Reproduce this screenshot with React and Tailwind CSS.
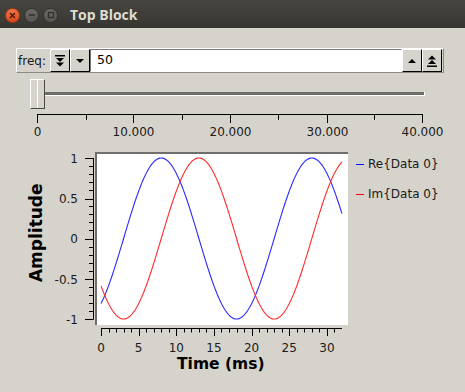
import React from 'react';

const FONT = { fontFamily: '"DejaVu Sans", "Liberation Sans", sans-serif' };

function wave(fn) {
  const pts = [];
  for (let i = 0; i <= 320; i++) {
    const t = i / 10;
    const x = 101 + t * 7.53;
    const y = 237.5 - 80.5 * fn((2 * Math.PI * (t - 8)) / 20);
    pts.push(`${x.toFixed(2)},${y.toFixed(2)}`);
  }
  return pts.join(' ');
}

function TitleBar() {
  return (
    <div className="h-[28px] flex items-center bg-gradient-to-b from-[#46453f] to-[#373632]">
      <div className="flex items-center gap-[4px] pl-[5px] pt-[2px]">
        <div className="w-[15px] h-[15px] rounded-full bg-gradient-to-b from-[#f0754a] to-[#d9461a] border border-[#a8380f] flex items-center justify-center">
          <svg width="7" height="7" viewBox="0 0 7 7"><path d="M1 1 L6 6 M6 1 L1 6" stroke="#4a1a08" strokeWidth="1.3" /></svg>
        </div>
        <div className="w-[15px] h-[15px] rounded-full bg-gradient-to-b from-[#6b6a65] to-[#55544f] border border-[#33322e] flex items-center justify-center">
          <svg width="8" height="8" viewBox="0 0 8 8"><path d="M1 4 H7" stroke="#2e2d2a" strokeWidth="1.4" /></svg>
        </div>
        <div className="w-[15px] h-[15px] rounded-full bg-gradient-to-b from-[#6b6a65] to-[#55544f] border border-[#33322e] flex items-center justify-center">
          <svg width="8" height="8" viewBox="0 0 8 8"><rect x="1.5" y="1.5" width="5" height="5" fill="none" stroke="#2e2d2a" strokeWidth="1.2" /></svg>
        </div>
      </div>
      <span className="ml-[12px] text-[14px] font-bold text-[#dfdbd2]" style={{ fontFamily: '"Open Sans", "Liberation Sans", sans-serif' }}>
        Top Block
      </span>
    </div>
  );
}

function ArrowButton({ kind }) {
  return (
    <div className="w-[20px] h-[23px] bg-[#d6d2cc] border-t border-l border-t-white border-l-white border-b border-r border-b-black border-r-black flex items-center justify-center">
      <svg width="12" height="14" viewBox="0 0 12 14">
        {kind === 'ddown' && (
          <g fill="black">
            <rect x="1" y="1" width="10" height="1.5" />
            <polygon points="2,4 10,4 6,8" />
            <polygon points="2,8.5 10,8.5 6,12.5" />
          </g>
        )}
        {kind === 'down' && <polygon points="2,5 10,5 6,9" fill="black" />}
        {kind === 'up' && <polygon points="2,9 10,9 6,5" fill="black" />}
        {kind === 'dup' && (
          <g fill="black">
            <polygon points="2,5.5 10,5.5 6,1.5" />
            <polygon points="2,10 10,10 6,6" />
            <rect x="1" y="11.5" width="10" height="1.5" />
          </g>
        )}
      </svg>
    </div>
  );
}

function Toolbar() {
  return (
    <div className="w-[428px] h-[25px] flex items-center border-t border-l border-t-white border-l-white border-b border-r border-b-[#8c8a85] border-r-[#8c8a85]">
      <span className="w-[33px] pl-[1px] text-[12px] text-[#1a1a1a]" style={FONT}>freq:</span>
      <ArrowButton kind="ddown" />
      <ArrowButton kind="down" />
      <div className="w-[312px] h-[23px] bg-white border-t border-l border-t-[#7a7873] border-l-[#7a7873] border-b border-r border-b-white border-r-white flex items-center pl-[6px] text-[12.5px] text-black" style={FONT}>
        50
      </div>
      <ArrowButton kind="up" />
      <ArrowButton kind="dup" />
    </div>
  );
}

function Slider() {
  return (
    <div className="flex items-center h-[30px] ml-[14px]">
      <div className="w-[15px] h-[30px] bg-[#d6d2cc] border-t border-l border-t-white border-l-white border-b border-r border-b-[#4a4945] border-r-[#4a4945] flex justify-center">
        <div className="w-[1px] h-full bg-[#8a8883] border-r border-r-white" />
      </div>
      <div className="w-[380px] h-[4px] bg-[#6e6d69] border-b border-r border-b-white border-r-white" />
    </div>
  );
}

function Scale() {
  const majors = [[37, '0'], [133, '10.000'], [230, '20.000'], [327, '30.000'], [422, '40.000']];
  const minors = [86, 182, 278, 374];
  return (
    <svg width="465" height="30" viewBox="0 110 465 30" className="block -ml-[16px]">
      <line x1="37" y1="113.5" x2="422.5" y2="113.5" stroke="black" />
      {majors.map(([x]) => <line key={x} x1={x + 0.5} y1="113" x2={x + 0.5} y2="122" stroke="black" />)}
      {minors.map((x) => <line key={x} x1={x + 0.5} y1="113" x2={x + 0.5} y2="119" stroke="black" />)}
      {majors.map(([x, l]) => (
        <text key={l} x={x + 0.5} y="135" textAnchor="middle" fontSize="12" fill="#1a1a1a" style={FONT}>{l}</text>
      ))}
    </svg>
  );
}

function Plot() {
  const yMajors = [[157, '1'], [197.5, '0.5'], [237.5, '0'], [278, '-0.5'], [318, '-1']];
  const yMinors = [];
  for (let i = 0; i <= 20; i++) if (i % 5 !== 0) yMinors.push(157 + i * 8.05);
  const xTicks = [];
  for (let t = 0; t <= 31; t++) xTicks.push(t);
  return (
    <svg width="300" height="218" viewBox="50 145 300 218" className="block">
      <rect x="95" y="151" width="253" height="173" fill="white" />
      <line x1="95" y1="152" x2="348" y2="152" stroke="#6f6e6a" strokeWidth="2" />
      <line x1="96" y1="151" x2="96" y2="324" stroke="#6f6e6a" strokeWidth="2" />
      <line x1="93.5" y1="157" x2="93.5" y2="318.5" stroke="black" />
      {yMajors.map(([y]) => <line key={y} x1="85" y1={Math.round(y) + 0.5} x2="93.5" y2={Math.round(y) + 0.5} stroke="black" />)}
      {yMinors.map((y) => <line key={y} x1="89" y1={Math.round(y) + 0.5} x2="93.5" y2={Math.round(y) + 0.5} stroke="black" />)}
      {yMajors.map(([y, l]) => (
        <text key={l} x="78" y={y + 4.5} textAnchor="end" fontSize="12" fill="#1a1a1a" style={FONT}>{l}</text>
      ))}
      <line x1="101" y1="327.5" x2="342" y2="327.5" stroke="black" />
      {xTicks.map((t) => {
        const x = Math.round(101 + t * 7.53) + 0.5;
        return <line key={t} x1={x} y1="327.5" x2={x} y2={t % 5 === 0 ? 335 : 331.5} stroke="black" />;
      })}
      {[0, 5, 10, 15, 20, 25, 30].map((t) => (
        <text key={t} x={101 + t * 7.53} y="351" textAnchor="middle" fontSize="12" fill="#1a1a1a" style={FONT}>{t}</text>
      ))}
      <polyline points={wave(Math.cos)} fill="none" stroke="#2a2aff" strokeWidth="1.1" />
      <polyline points={wave(Math.sin)} fill="none" stroke="#ff2a2a" strokeWidth="1.1" />
    </svg>
  );
}

function Legend() {
  const items = [['#0000ff', 'Re{Data 0}'], ['#ff0000', 'Im{Data 0}']];
  return (
    <div className="flex flex-col gap-[14px] pt-[10px] pl-[6px]">
      {items.map(([c, l]) => (
        <div key={l} className="flex items-center gap-[4px] h-[16px] text-[12px] text-[#1a1a1a]" style={FONT}>
          <svg width="8" height="16" viewBox="0 0 8 16" className="block">
            <rect x="0" y="8" width="8" height="1" fill={c} shapeRendering="crispEdges" />
          </svg>
          <span>{l}</span>
        </div>
      ))}
    </div>
  );
}

export default function App() {
  return (
    <div className="w-[465px] h-[392px] bg-[#d6d2cc] overflow-hidden" style={FONT}>
      <TitleBar />
      <div className="pl-[16px] pt-[20px]">
        <Toolbar />
        <div className="mt-[6px]">
          <Slider />
        </div>
        <div className="mt-[2px]">
          <Scale />
        </div>
        <div className="flex mt-[5px] -ml-[16px]">
          <div className="w-[50px] h-[218px] flex items-center justify-center">
            <span className="-rotate-90 whitespace-nowrap text-[17px] font-bold text-black ml-[22px] -mt-[45px]" style={FONT}>Amplitude</span>
          </div>
          <div className="flex flex-col">
            <Plot />
          </div>
          <Legend />
        </div>
        <div className="-mt-[11px] ml-[161px] text-[15.5px] font-bold text-black" style={FONT}>Time (ms)</div>
      </div>
    </div>
  );
}
